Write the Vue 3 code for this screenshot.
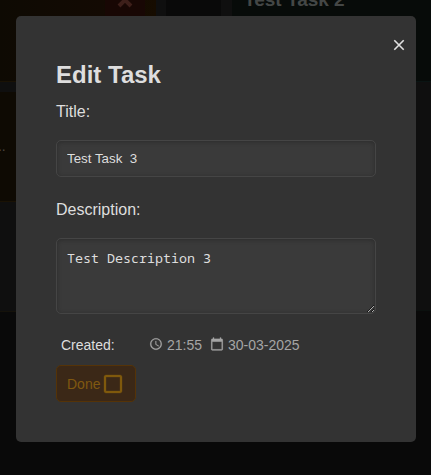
<script setup>
import { ref } from 'vue'

const title = ref('Test Task  3')
const description = ref('Test Description 3')
const done = ref(false)
</script>

<template>
  <div class="page">
    <div class="board" inert>
      <section class="column amber">
        <article class="card first">
          <button class="remove" type="button" aria-label="Delete task">
            <svg viewBox="0 0 16 16" width="16" height="16"><path d="M2 2 L14 14 M14 2 L2 14" /></svg>
          </button>
        </article>
        <article class="card second"><p>...</p></article>
      </section>
      <section class="column teal">
        <article class="card first"><h3>Test Task 2</h3></article>
      </section>
    </div>

    <div class="overlay">
      <form class="modal" role="dialog" aria-labelledby="dialog-title" @submit.prevent>
        <button class="close" type="button" aria-label="Close">
          <svg viewBox="0 0 12 12" width="12" height="12"><path d="M1.3 1.3 L10.7 10.7 M10.7 1.3 L1.3 10.7" /></svg>
        </button>
        <h2 id="dialog-title">Edit Task</h2>
        <label for="task-title">Title:</label>
        <input id="task-title" v-model="title" class="field" type="text" />
        <label for="task-description">Description:</label>
        <textarea id="task-description" v-model="description" class="field"></textarea>
        <div class="meta">
          <span class="created">Created:</span>
          <span class="stamp">
            <svg viewBox="0 0 24 24" width="14" height="14"><path d="M11.99 2C6.47 2 2 6.48 2 12s4.47 10 9.99 10C17.52 22 22 17.52 22 12S17.52 2 11.99 2zM12 20c-4.42 0-8-3.58-8-8s3.58-8 8-8 8 3.58 8 8-3.58 8-8 8zm.5-13H11v6l5.25 3.15.75-1.23-4.5-2.67z" /></svg>
            21:55
          </span>
          <span class="stamp">
            <svg viewBox="0 0 24 24" width="14" height="14"><path d="M20 3h-1V1h-2v2H7V1H5v2H4c-1.100 0-2 .9-2 2v16c0 1.100.9 2 2 2h16c1.100 0 2-.9 2-2V5c0-1.100-.9-2-2-2zm0 18H4V8h16v13z" /></svg>
            30-03-2025
          </span>
        </div>
        <button class="done" type="button" :aria-pressed="done" @click="done = !done">
          Done
          <svg viewBox="0 0 24 24" width="24" height="24"><path d="M19 5v14H5V5h14m0-2H5c-1.100 0-2 .9-2 2v14c0 1.100.9 2 2 2h14c1.100 0 2-.9 2-2V5c0-1.100-.9-2-2-2z" /></svg>
        </button>
      </form>
    </div>
  </div>
</template>

<style>
body {
  margin: 0;
  background: #090909;
}
</style>

<style scoped>
.page {
  min-height: 100vh;
  font-family: "Liberation Sans", Arial, sans-serif;
  color: #dedede;
}
.board {
  display: grid;
  grid-template-columns: 166px 1fr;
  align-items: start;
  column-gap: 55px;
}
.column {
  box-sizing: border-box;
  display: flex;
  flex-direction: column;
  gap: 10px;
  padding-bottom: 109px;
  background: #0f0f0f;
}
.column.amber {
  padding-right: 10px;
  border-bottom: 1px solid #15120a;
}
.column.teal {
  padding-left: 11px;
  padding-bottom: 228px;
  border-bottom: 1px solid #0b100e;
}
.card {
  box-sizing: border-box;
  overflow: hidden;
}
.amber .card {
  background: #0e0a03;
  border-bottom: 1px solid #1a1204;
}
.teal .card {
  background: #070b09;
  border-bottom: 1px solid #0a1413;
}
.card.first {
  height: 82px;
}
.amber .card.first {
  display: flex;
  justify-content: flex-end;
  align-items: flex-start;
  background: linear-gradient(90deg, #0e0a03, #130a03 65%, #160c00);
}
.card.second {
  height: 110px;
}
.card p {
  margin: 0;
  padding-top: 45px;
  font-size: 14px;
  line-height: 18px;
  color: #4a4540;
  text-indent: -6px;
}
.card h3 {
  margin: -13px 0 0;
  padding-left: 12px;
  font-size: 19px;
  line-height: 26px;
  color: #444746;
}
.remove {
  display: flex;
  justify-content: center;
  align-items: flex-start;
  width: 40px;
  height: 16px;
  margin-right: 11px;
  padding: 0;
  border: 0;
  background: #180704;
}
.remove svg {
  margin-top: -8px;
  fill: none;
  stroke: #3d1f1a;
  stroke-width: 4;
}
.overlay {
  position: fixed;
  inset: 0;
  padding: 16px 15px 16px 16px;
}
.modal {
  position: relative;
  box-sizing: border-box;
  max-width: 400px;
  margin: 0 auto;
  padding: 40px;
  display: flex;
  flex-direction: column;
  align-items: flex-start;
  border-radius: 5px;
  background: #333;
}
.close {
  position: absolute;
  top: 23px;
  right: 11px;
  padding: 0;
  border: 0;
  background: none;
}
.close svg {
  display: block;
  fill: none;
  stroke: #e2e2e2;
  stroke-width: 1.6;
}
h2 {
  margin: 5px 0 11px;
  font-size: 24px;
  line-height: 28px;
}
label {
  font-size: 16px;
  line-height: 24px;
}
.field {
  box-sizing: border-box;
  width: 100%;
  margin: 16px 0 21px;
  padding: 10px;
  border: 1px solid #454545;
  border-radius: 5px;
  outline: 0;
  background: #3a3a3a;
  box-shadow: inset 0 1px 4px #2c2c2c;
  color: #dedede;
}
input.field {
  height: 37px;
  font-family: "Liberation Sans", Arial, sans-serif;
}
textarea.field {
  height: 76px;
  margin-bottom: 20px;
  font-family: "Noto Sans Mono", "DejaVu Sans Mono", monospace;
  resize: both;
}
.meta {
  display: flex;
  align-items: center;
  gap: 8px;
  padding-left: 5px;
  font-size: 14px;
  line-height: 22px;
}
.created {
  width: 80px;
}
.stamp {
  display: flex;
  align-items: center;
  gap: 4px;
  color: #a5a5a5;
}
.stamp svg {
  margin-bottom: 2px;
  fill: #a5a5a5;
  stroke: #a5a5a5;
  stroke-width: 0.3;
}
.done {
  display: flex;
  align-items: center;
  gap: 1px;
  height: 37px;
  margin-top: 9px;
  padding: 0 10px;
  border: 1px solid #553307;
  border-radius: 5px;
  background: #3b2817;
  color: #805810;
  font-family: inherit;
  font-size: 14px;
}
.done svg {
  fill: #805a0c;
  stroke: #805a0c;
  stroke-width: 0.3;
}
</style>
